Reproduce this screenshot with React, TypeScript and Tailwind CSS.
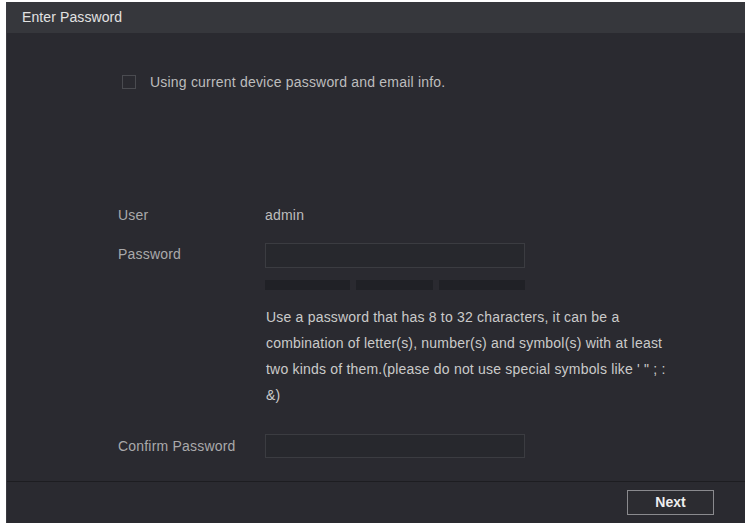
export default function App() {
  const help = [
    "Use a password that has 8 to 32 characters, it can be a",
    "combination of letter(s), number(s) and symbol(s) with at least",
    "two kinds of them.(please do not use special symbols like ' \" ; :",
    "&)",
  ];

  return (
    <div className="w-[751px] h-[526px] bg-white pl-[6px] pr-[6px] pt-[2px] pb-[3px] font-['Liberation_Sans',Arial,sans-serif]">
      <div className="h-full flex flex-col bg-[#2a2a30] border-l border-[#3a3a40]">
        {/* Header */}
        <div className="h-[31px] shrink-0 flex items-center pl-[15px] bg-[#36373c] text-[14px] tracking-[0.1px] text-[#e2e2e2]">
          Enter Password
        </div>

        {/* Body */}
        <div className="flex-1 flex flex-col pl-[112px] text-[14px] tracking-[0.2px]">
          <div className="mt-[39px] h-[20px] flex items-center pl-[3px]">
            <span className="w-[14px] h-[14px] border border-[#4a4b50] bg-[#2a2a30]" />
            <span className="ml-[14px] text-[#bdbdbd]">
              Using current device password and email info.
            </span>
          </div>

          <div className="mt-[113px] h-[20px] flex items-center">
            <span className="w-[146px] -ml-[1px] text-[#a9a9ab]">User</span>
            <span className="ml-[1px] text-[#bdbdbd]">admin</span>
          </div>

          <div className="mt-[18px] h-[25px] flex items-center">
            <span className="w-[146px] -ml-[1px] -mt-[2px] text-[#a9a9ab]">Password</span>
            <div className="ml-[1px] w-[260px] h-[25px] border border-[#3b3c41] bg-[#27282d]" />
          </div>

          <div className="mt-[12px] ml-[146px] w-[260px] h-[10px] flex gap-[6px]">
            <div className="w-[85px] bg-[#202126]" />
            <div className="w-[77px] bg-[#202126]" />
            <div className="flex-1 bg-[#202126]" />
          </div>

          <div className="mt-[14px] ml-[147px] leading-[26px] text-[#cacaca]">
            {help.map((line) => (
              <div key={line} className="whitespace-nowrap">
                {line}
              </div>
            ))}
          </div>

          <div className="mt-[26px] h-[24px] flex items-center">
            <span className="w-[146px] -ml-[1px] text-[#a9a9ab]">Confirm Password</span>
            <div className="ml-[1px] w-[260px] h-[24px] border border-[#3b3c41] bg-[#27282d]" />
          </div>
        </div>

        {/* Footer */}
        <div className="h-[42px] shrink-0 border-t border-[#1d1d21] flex items-center justify-end pr-[31px]">
          <button className="w-[87px] h-[25px] border border-[#8a8a8e] bg-[#2c2c31] text-[14px] text-[#eeeeee] font-semibold">
            Next
          </button>
        </div>
      </div>
    </div>
  );
}
